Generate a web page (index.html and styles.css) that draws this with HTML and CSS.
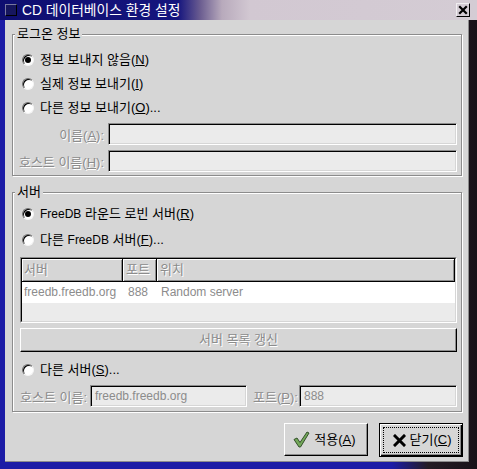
FILE: index.html
```html
<!DOCTYPE html>
<html lang="ko">
<head>
<meta charset="utf-8">
<title>CD 데이터베이스 환경 설정</title>
<link rel="stylesheet" href="styles.css">
</head>
<body>
<div class="window">
  <div class="titlebar">
    <span class="app-icon"></span>
    <span class="title">CD 데이터베이스 환경 설정</span>
    <span class="close-x">
      <svg width="10" height="10" viewBox="0 0 10 10"><path d="M2 2 L8 8 M8 2 L2 8" stroke="#000" stroke-width="2.2" stroke-linecap="square"/></svg>
    </span>
  </div>
  <div class="frame">
    <div class="content">
      <fieldset class="group g1">
        <legend>로그온 정보</legend>
        <div class="group-body g1-body">
          <div class="radio-row"><span class="radio checked"></span><span>정보 보내지 않음(<u>N</u>)</span></div>
          <div class="radio-row"><span class="radio"></span><span>실제 정보 보내기(<u>I</u>)</span></div>
          <div class="radio-row"><span class="radio"></span><span>다른 정보 보내기(<u>O</u>)...</span></div>
          <div class="field-row first"><span class="flabel dis"><span>이름(<u>A</u>):</span></span><div class="entry"></div></div>
          <div class="field-row"><span class="flabel dis"><span>호스트 이름(<u>H</u>):</span></span><div class="entry"></div></div>
        </div>
      </fieldset>
      <fieldset class="group g2">
        <legend>서버</legend>
        <div class="group-body g2-body">
          <div class="radio-row tall"><span class="radio checked"></span><span><span class="lat">FreeDB</span> 라운드 로빈 서버(<u>R</u>)</span></div>
          <div class="radio-row tall"><span class="radio"></span><span>다른 <span class="lat">FreeDB</span> 서버(<u>F</u>)...</span></div>
          <div class="list">
            <div class="list-inner">
              <div class="list-head">
                <div class="hcell c1 dis">서버</div>
                <div class="hcell c2 dis">포트</div>
                <div class="hcell c3 dis">위치</div>
              </div>
              <div class="list-row">
                <div class="cell c1">freedb.freedb.org</div>
                <div class="cell c2">888</div>
                <div class="cell c3">Random server</div>
              </div>
            </div>
          </div>
          <div class="refresh-btn"><span class="dis">서버 목록 갱신</span></div>
          <div class="radio-row other"><span class="radio"></span><span>다른 서버(<u>S</u>)...</span></div>
          <div class="host-row">
            <span class="hlabel dis">호스트 이름:</span>
            <div class="entry e-host">freedb.freedb.org</div>
            <span class="plabel dis">포트(<u>P</u>):</span>
            <div class="entry e-port">888</div>
          </div>
        </div>
      </fieldset>
      <div class="actions">
        <button class="btn apply" type="button">
          <svg width="17" height="17" viewBox="0 0 17 17"><path d="M1 8.5 L4 7 L7 11.5 L14 1 L16 2 L7.5 16 L6 16 Z" fill="#74a85a" stroke="#33502a" stroke-width="1" stroke-linejoin="round"/></svg>
          <span>적용(<u>A</u>)</span>
        </button>
        <button class="btn default" type="button">
          <span class="focus">
            <svg width="13" height="13" viewBox="0 0 13 13"><path d="M2 2 L11 11 M11 2 L2 11" stroke="#000" stroke-width="3" stroke-linecap="square"/></svg>
            <span>닫기(<u>C</u>)</span>
          </span>
        </button>
      </div>
    </div>
  </div>
</div>
</body>
</html>
```
FILE: styles.css
```css
* { box-sizing: border-box; }

html, body {
  margin: 0;
  padding: 0;
  background: #d6d6d6;
}

.window {
  width: 477px;
  height: 469px;
  display: flex;
  flex-direction: column;
  font-family: "Liberation Sans", "Noto Sans CJK KR", sans-serif;
  font-size: 13px;
  color: #000;
  overflow: hidden;
}

u { text-decoration: underline; text-underline-offset: 1px; }

.lat { font-size: 12px; }

/* title bar */
.titlebar {
  flex: none;
  height: 20px;
  display: flex;
  align-items: center;
  background: linear-gradient(90deg, #0e0e70 0, #15157e 178px, #6a5c90 200px, #b8aabc 222px, #d2c8d2 250px, #d4ccd4 100%);
}
.app-icon {
  width: 12px;
  height: 12px;
  margin-left: 5px;
  background: #16165e;
  border: 1px solid;
  border-color: #7878a0 #000 #000 #7878a0;
}
.title {
  margin-left: 5px;
  color: #fff;
  font-size: 13.8px;
  line-height: 15px;
}
.close-x {
  margin-left: auto;
  margin-right: 7px;
  width: 14px;
  height: 14px;
  display: flex;
  align-items: center;
  justify-content: center;
  background: #d4ccd4;
  border: 1px solid;
  border-color: #f0eef0 #000 #000 #f0eef0;
}

/* window frame */
.frame {
  flex: 1;
  display: flex;
  padding: 0 8px 7px 5px;
  background: linear-gradient(90deg, #1c1ca6 0, #1c1ca6 392px, #241c24 428px, #181218 100%);
}
.content {
  flex: 1;
  display: flex;
  flex-direction: column;
  background: #d6d6d6;
  padding: 7px 7px 0 7px;
  box-shadow: inset -1px -1px 0 #8c8c8c;
}

/* groups */
.group {
  margin: 0;
  padding: 0;
  min-width: 0;
  border: 1px solid #8c8c8c;
  box-shadow: inset 1px 1px 0 #fff, 1px 1px 0 #fff;
}
.group legend {
  margin-left: 2px;
  padding: 0 2px;
  line-height: 14px;
  background: #d6d6d6;
}
.g2 { margin-top: 9px; }

.group-body {
  display: flex;
  flex-direction: column;
}
.g1-body { padding: 7px 4px 3px 9px; }
.g2-body { padding: 2px 4px 4px 9px; }

.radio-row {
  height: 24px;
  display: flex;
  align-items: center;
  gap: 6px;
  line-height: 14px;
  white-space: nowrap;
}
.radio-row.tall { height: 26px; }
.radio-row.other { height: 26px; margin-top: 5px; }

.radio {
  width: 12px;
  height: 12px;
  flex: none;
  border-radius: 50%;
  background: #fff;
  border: 1px solid;
  border-color: #707070 #f4f4f4 #f4f4f4 #707070;
  box-shadow: inset 1px 1px 0 #000;
  display: flex;
  align-items: center;
  justify-content: center;
}
.radio.checked::after {
  content: "";
  width: 6px;
  height: 6px;
  border-radius: 50%;
  background: #000;
}

.dis {
  color: #8c8c8c;
  text-shadow: 1px 1px 0 #fff;
}

.field-row {
  height: 22px;
  display: flex;
  align-items: center;
  gap: 4px;
  margin-left: -4px;
  margin-top: 5px;
}
.field-row.first { margin-top: 3px; }
.flabel {
  width: 86px;
  flex: none;
  display: flex;
  justify-content: flex-end;
  white-space: nowrap;
}

.entry {
  height: 22px;
  flex: 1;
  background: #ebebeb;
  border: 1px solid;
  border-color: #8c8c8c #fff #fff #8c8c8c;
  box-shadow: inset 1px 1px 0 #000, inset -1px -1px 0 #d6d6d6;
  color: #8c8c8c;
  padding: 2px 0 0 4px;
  line-height: 16px;
  font-size: 12px;
  white-space: nowrap;
}

/* list */
.list {
  margin: 4px 0 0 -2px;
  height: 66px;
  border: 1px solid;
  border-color: #8c8c8c #fff #fff #8c8c8c;
  background: #ebebeb;
}
.list-inner {
  height: 100%;
  border-top: 1px solid #000;
  border-left: 1px solid #000;
  border-right: 1px solid #d6d6d6;
  border-bottom: 1px solid #d6d6d6;
}
.list-head {
  height: 23px;
  display: flex;
}
.hcell {
  height: 23px;
  background: #d6d6d6;
  border-right: 1px solid #000;
  border-bottom: 1px solid #000;
  box-shadow: inset 1px 1px 0 #fff, inset -1px -1px 0 #8c8c8c;
  padding: 4px 0 0 3px;
  line-height: 14px;
}
.c1 { width: 101px; flex: none; }
.c2 { width: 34px; flex: none; }
.c3 { flex: 1; }
.hcell.c1 { padding-left: 2px; }
.list-row {
  height: 21px;
  display: flex;
  background: #fff;
  color: #8c8c8c;
  font-size: 12px;
}
.cell {
  padding: 3px 0 0 3px;
  line-height: 14px;
  white-space: nowrap;
}
.cell.c1 { padding-left: 2px; }
.cell.c2 { padding-left: 5px; }
.cell.c3 { padding-left: 4px; }

.refresh-btn {
  margin: 5px 0 0 -2px;
  height: 24px;
  display: flex;
  align-items: center;
  justify-content: center;
  background: #d6d6d6;
  border: 1px solid;
  border-color: #fff #000 #000 #fff;
  box-shadow: inset -1px -1px 0 #8c8c8c;
  line-height: 14px;
}

.host-row {
  margin: 2px 0 0 -2px;
  height: 22px;
  display: flex;
  align-items: center;
}
.hlabel { width: 70px; flex: none; white-space: nowrap; }
.e-host { width: 157px; flex: none; }
.plabel { width: 46px; margin-left: 6px; flex: none; white-space: nowrap; }
.e-port { flex: 1; }

/* buttons */
.actions {
  display: flex;
  justify-content: flex-end;
  gap: 11px;
  margin: 11px -1px 0 0;
}
.btn {
  font: inherit;
  color: #000;
  margin: 0;
  padding: 0;
  width: 84px;
  height: 33px;
  display: flex;
  align-items: center;
  justify-content: center;
  gap: 4px;
  background: #d6d6d6;
  border: 1px solid;
  border-color: #fff #000 #000 #fff;
  box-shadow: inset -1px -1px 0 #8c8c8c;
  line-height: 14px;
}
.btn.apply { padding-right: 3px; }
.btn.default {
  height: 34px;
  border: 1px solid #000;
  box-shadow: inset 1px 1px 0 #fff, inset -1px -1px 0 #000, inset -2px -2px 0 #8c8c8c;
  padding: 3px;
}
.focus {
  flex: 1;
  align-self: stretch;
  display: flex;
  align-items: center;
  justify-content: center;
  gap: 4px;
  border: 1px dotted #000;
  padding-left: 2px;
}
```
